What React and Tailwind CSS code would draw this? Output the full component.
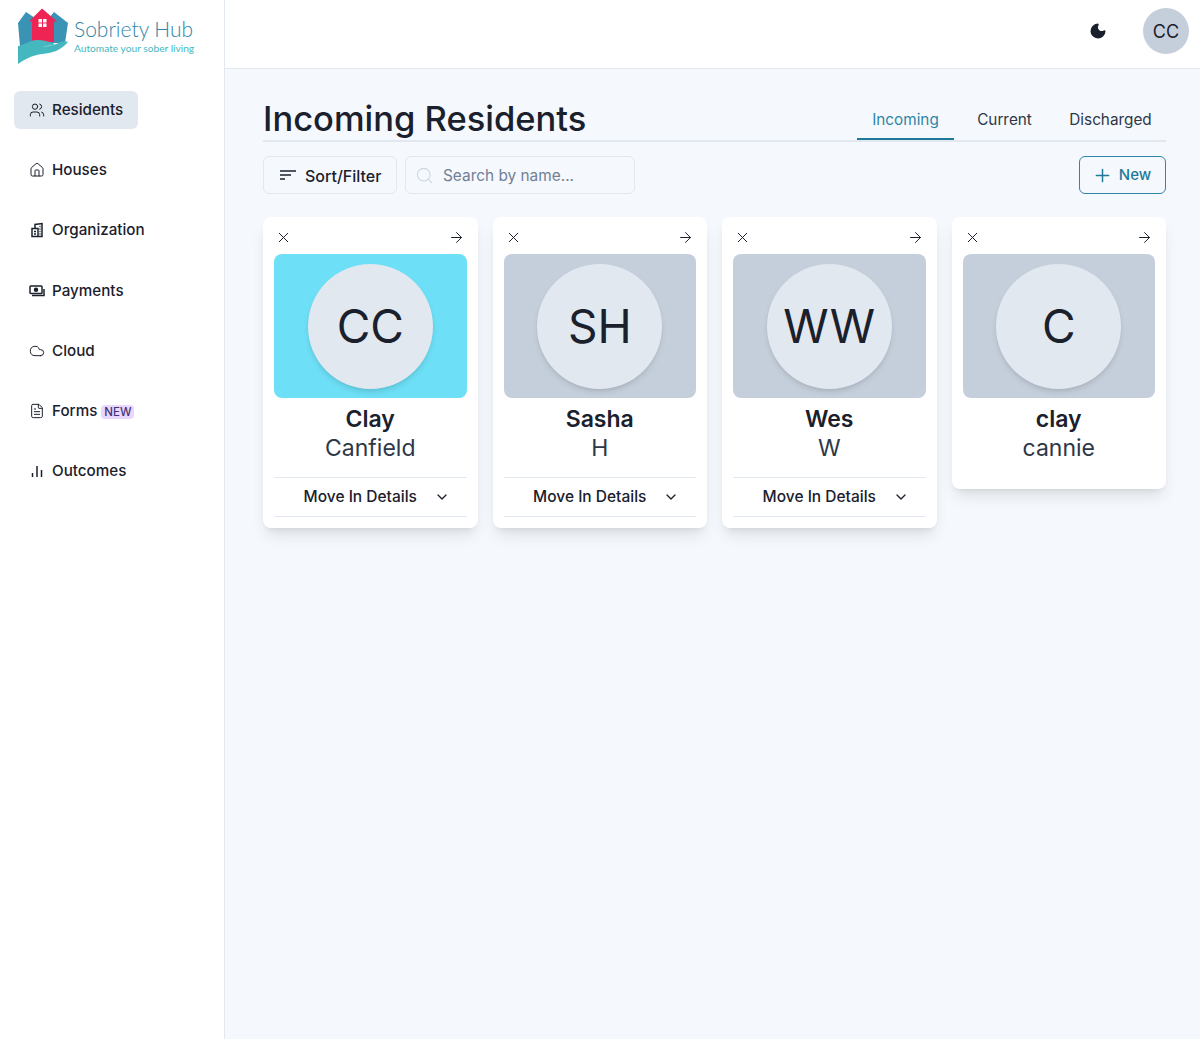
import React from "react";
import { Users, Home, Cloud, FileText, Moon, Plus, Search, X, ArrowRight, ChevronDown } from "lucide-react";

const font = "font-['Inter','Liberation_Sans',sans-serif]";

function Logo() {
  return (
    <div className="flex h-[68px] items-start pl-[16px] pt-[8px]">
      <svg width="54" height="57" viewBox="0 0 54 57" className="shrink-0">
        <path d="M2 15 L10 4 L19 10 L19 38 L4 38 Z" fill="#3a93b5" />
        <path d="M52 15 L38 4 L33 10 L33 35 L49 35 Z" fill="#3a93b5" />
        <path d="M13 13.5 L26 0.5 L41 13.5 L38 13.5 L38 34 L16 34 L16 13.5 Z" fill="#ee2455" />
        <rect x="22.5" y="11" width="3.5" height="3.5" fill="#fff" />
        <rect x="27" y="11" width="3.5" height="3.5" fill="#fff" />
        <rect x="22.5" y="15.5" width="3.5" height="3.5" fill="#fff" />
        <rect x="27" y="15.5" width="3.5" height="3.5" fill="#fff" />
        <path d="M2 38 C8 37 14 32 21 32 C28 32 34 34 39 36 C35 38 31 38 27 38 C33 39 39 37 44 34 C47 33 50 33 52 34 C46 41 39 44 33 45 C25 46 14 47 2 56 Z" fill="#45b8bf" />
      </svg>
      <div className="ml-[4px] mt-[8px] font-['Lato','Noto_Sans',sans-serif]">
        <div className="whitespace-nowrap text-[21px] leading-[26px] font-light text-[#2f86a6]">Sobriety Hub</div>
        <div className="whitespace-nowrap text-[10.2px] leading-[12px] text-[#45b8bf]">Automate your sober living</div>
      </div>
    </div>
  );
}

const Org = (p) => (
  <svg width="16" height="16" viewBox="0 0 16 16" fill="none" stroke="currentColor" strokeWidth="1.1" {...p}>
    <path d="M6 6V2.5L13 1.5V14.5H3V6.5H9V14.5" />
    <path d="M5 9.5h2M5 12h2M10.5 4.5h1M10.5 7h1M10.5 9.5h1M10.5 12h1" />
  </svg>
);
const Pay = (p) => (
  <svg width="16" height="16" viewBox="0 0 16 16" fill="none" stroke="currentColor" strokeWidth="1.1" {...p}>
    <rect x="1" y="3" width="12" height="7.5" rx="0.8" />
    <circle cx="7" cy="6.7" r="1.5" fill="currentColor" />
    <path d="M15 6v6.5H3" />
  </svg>
);
const Bars = (p) => (
  <svg width="16" height="16" viewBox="0 0 16 16" fill="none" stroke="currentColor" strokeWidth="1.1" {...p}>
    <path d="M3.5 10v4M8 3v11M12.5 7v7" />
  </svg>
);

function NavItem({ icon: I, label, active, badge }) {
  return (
    <div className={`flex h-[38px] items-center self-start rounded-md pl-[15px] pr-[15px] ${active ? "bg-[#e2e8f0]" : ""}`}>
      <I size={16} strokeWidth={1.5} className="shrink-0 text-[#1a202c]" />
      <span className="ml-[7px] pt-[1px] text-[15.2px] font-medium text-[#1a202c]">{label}</span>
      {badge && (
        <span className="ml-[4px] mt-[3px] rounded-sm bg-[#e9d8fd] px-[3px] text-[11.5px] leading-[14px] font-medium text-[#44337a]">{badge}</span>
      )}
    </div>
  );
}

function Card({ initials, first, last, avatar, details = true }) {
  return (
    <div className={`self-start rounded-lg bg-white px-[11px] shadow-lg ${details ? "pb-[11px]" : "pb-[26px]"}`}>
      <div className="flex h-[37px] items-end justify-between pb-[8px] pl-[1px] pr-[2px]">
        <X size={17} strokeWidth={1.4} className="text-[#1a202c]" />
        <ArrowRight size={17} strokeWidth={1.4} className="text-[#1a202c]" />
      </div>
      <div className={`flex h-[144px] items-center justify-center rounded-lg ${avatar}`}>
        <div className="flex h-[125px] w-[125px] items-center justify-center rounded-full bg-[#e2e8f0] pt-[1px] text-[46px] text-[#1a202c] shadow-md">{initials}</div>
      </div>
      <div className="mt-[6px] text-center text-[23px] leading-[30px] font-semibold text-[#1a202c]">{first}</div>
      <div className="-mt-[1px] text-center text-[23px] leading-[30px] text-[#2d3748]">{last}</div>
      {details && (
        <div className="mt-[14px] flex h-[40px] items-center justify-center gap-[17px] border-y border-[#e2e8f0] pl-[13px] text-[15.5px] font-medium text-[#1a202c]">
          <span>Move In Details</span>
          <ChevronDown size={16} strokeWidth={2} />
        </div>
      )}
    </div>
  );
}

export default function App() {
  return (
    <div className={`flex min-h-[1039px] bg-[#f5f8fc] ${font}`}>
      <aside className="w-[225px] shrink-0 border-r border-[#e2e8f0] bg-white">
        <Logo />
        <nav className="mt-[23px] flex flex-col gap-[22.2px] pl-[14px]">
          <NavItem icon={Users} label="Residents" active />
          <NavItem icon={Home} label="Houses" />
          <NavItem icon={Org} label="Organization" />
          <NavItem icon={Pay} label="Payments" />
          <NavItem icon={Cloud} label="Cloud" />
          <NavItem icon={FileText} label="Forms" badge="NEW" />
          <NavItem icon={Bars} label="Outcomes" />
        </nav>
      </aside>
      <div className="min-w-0 flex-1">
        <header className="flex h-[69px] items-start justify-end border-b border-[#e2e8f0] bg-white pr-[11px] pt-[8px]">
          <Moon size={18} fill="#1a202c" className="mr-[36px] mt-[14px] text-[#1a202c]" />
          <div className="flex h-[46px] w-[46px] items-center justify-center rounded-full bg-[#c5cfdc] text-[18px] text-[#1a202c]">CC</div>
        </header>
        <main className="pl-[38px] pr-[34px]">
          <div className="mt-[29px] flex h-[44px] items-end justify-between border-b-2 border-[#e2e8f0]">
            <h1 className="whitespace-nowrap text-[34.5px] leading-[42px] font-medium text-[#1a202c]">Incoming Residents</h1>
            <div className="flex text-[15.3px]">
              <div className="-mb-[2px] h-[44px] w-[97px] border-b-2 border-[#1f7a99] pt-[3px] text-center leading-[42px] text-[#2f86a6]">Incoming</div>
              <div className="h-[44px] w-[101px] pt-[3px] text-center leading-[42px] text-[#2d3748]">Current</div>
              <div className="h-[44px] w-[111px] pt-[3px] text-center leading-[42px] text-[#2d3748]">Discharged</div>
            </div>
          </div>
          <div className="mt-[14px] flex items-center">
            <button className="flex h-[38px] w-[134px] items-center gap-[9px] rounded-md border border-[#e2e8f0] pl-[16px] text-[16px] font-medium text-[#1a202c]">
              <svg width="16" height="12" viewBox="0 0 16 12" fill="none" stroke="#1a202c" strokeWidth="1.6">
                <path d="M0 2h16M0 6h11M0 10h5" />
              </svg>
              <span className="whitespace-nowrap pt-[1px]">Sort/Filter</span>
            </button>
            <div className="ml-[8px] flex h-[38px] w-[230px] items-center rounded-md border border-[#e2e8f0] pl-[9px] text-[15.4px] text-[#718096]">
              <Search size={19} strokeWidth={1.3} className="text-[#cbd5e0]" />
              <span className="ml-[9px] pt-[1px]">Search by name...</span>
            </div>
            <button className="ml-auto flex h-[38px] w-[87px] items-center justify-center gap-[6px] rounded-md border border-[#2f86a6] pr-[2px] text-[15px] font-medium text-[#1f7a99]">
              <Plus size={21} strokeWidth={1.7} />
              <span className="pt-[1px]">New</span>
            </button>
          </div>
          <div className="mt-[23px] grid grid-cols-4 gap-[15px]">
            <Card initials="CC" first="Clay" last="Canfield" avatar="bg-[#6ddff6]" />
            <Card initials="SH" first="Sasha" last="H" avatar="bg-[#c5cfdc]" />
            <Card initials="WW" first="Wes" last="W" avatar="bg-[#c5cfdc]" />
            <Card initials="C" first="clay" last="cannie" avatar="bg-[#c5cfdc]" details={false} />
          </div>
        </main>
      </div>
    </div>
  );
}
